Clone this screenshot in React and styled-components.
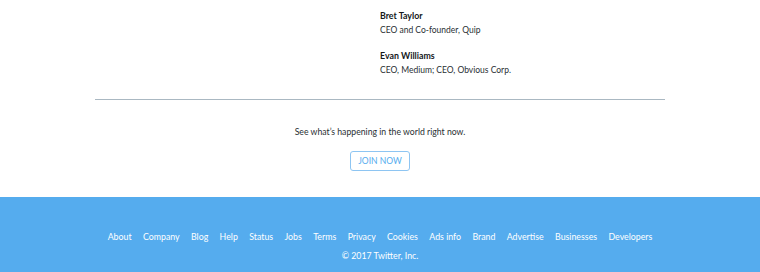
import React from 'react'
import styled, { createGlobalStyle } from 'styled-components'

const GlobalStyle = createGlobalStyle`
    body {
        margin: 0;
        background: #fff;
        font-family: Lato, "Liberation Sans", sans-serif;
        color: #14171a;
    }
`

const people = [
    { name: 'Bret Taylor', role: 'CEO and Co-founder, Quip' },
    { name: 'Evan Williams', role: 'CEO, Medium; CEO, Obvious Corp.' },
]

const links = ['About', 'Company', 'Blog', 'Help', 'Status', 'Jobs', 'Terms', 'Privacy', 'Cookies', 'Ads info', 'Brand', 'Advertise', 'Businesses', 'Developers']

function App() {
    return (
        <Page>
            <GlobalStyle />
            <Main>
                <Board>
                    <div />
                    <People>
                        {people.map(p => (
                            <Person key={p.name}>
                                <Name>{p.name}</Name>
                                <Role>{p.role}</Role>
                            </Person>
                        ))}
                    </People>
                </Board>
                <Signup>
                    <Tagline>See what’s happening in the world right now.</Tagline>
                    <JoinButton>Join now</JoinButton>
                </Signup>
            </Main>
            <Footer>
                <Links>
                    {links.map(l => <FooterLink key={l}>{l}</FooterLink>)}
                </Links>
                <Copy>© 2017 Twitter, Inc.</Copy>
            </Footer>
        </Page>
    )
}

export default App

const Page = styled.div`
    width: 760px;
    height: 272px;
    display: flex;
    flex-direction: column;
    overflow: hidden;
`

const Main = styled.div`
    width: 570px;
    margin: 0 auto;
    flex: 1;
`

const Board = styled.div`
    display: grid;
    grid-template-columns: 1fr 1fr;
    border-bottom: 1px solid #aab8c2;
    padding: 9px 0 22px;
`

const People = styled.div`
    display: flex;
    flex-direction: column;
    gap: 12px;
`

const Person = styled.div`
    display: flex;
    flex-direction: column;
`

const Name = styled.div`
    font-size: 8.8px;
    font-weight: 700;
    line-height: 14px;
`

const Role = styled.div`
    font-size: 8.5px;
    line-height: 14px;
    color: #292f33;
`

const Signup = styled.div`
    display: flex;
    flex-direction: column;
    align-items: center;
    padding-top: 25px;
`

const Tagline = styled.p`
    margin: 0;
    font-size: 8.7px;
    line-height: 14px;
    color: #292f33;
`

const JoinButton = styled.button`
    margin-top: 12px;
    width: 60px;
    height: 20px;
    border: 1px solid #8ec5f2;
    border-radius: 3px;
    background: #fff;
    color: #55acee;
    font-family: inherit;
    font-size: 8.5px;
    text-transform: uppercase;
    padding: 0;
    cursor: pointer;
`

const Footer = styled.footer`
    height: 75px;
    background: #55acee;
    color: #fff;
    display: flex;
    flex-direction: column;
    align-items: center;
    padding-top: 33px;
    box-sizing: border-box;
`

const Links = styled.nav`
    display: flex;
    gap: 11.4px;
`

const FooterLink = styled.a`
    font-size: 8.8px;
    line-height: 14px;
    color: #fff;
`

const Copy = styled.div`
    margin-top: 5px;
    font-size: 8.8px;
    line-height: 14px;
`
